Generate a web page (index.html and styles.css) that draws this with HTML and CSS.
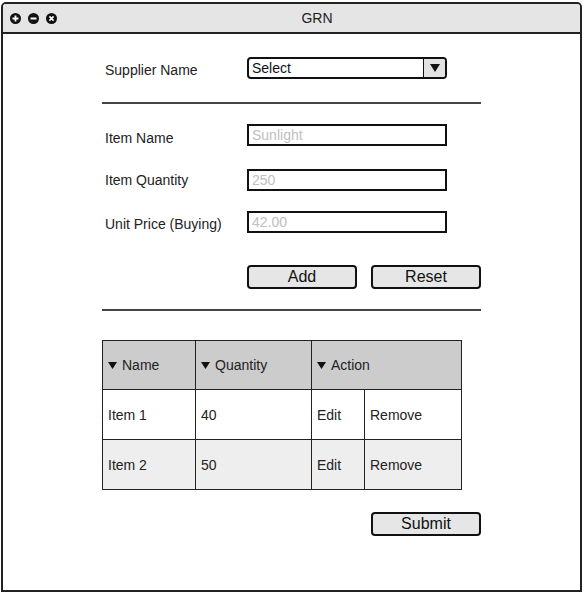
FILE: index.html
```html
<!DOCTYPE html>
<html>
<head>
<meta charset="utf-8">
<link rel="stylesheet" href="styles.css">
</head>
<body>
<div class="window">
  <div class="titlebar">
    <div class="wicons">
      <svg class="wicon" viewBox="0 0 11 11"><circle cx="5.5" cy="5.5" r="5.5" fill="#111"/><path d="M5.5 2.5v6M2.5 5.5h6" stroke="#fff" stroke-width="1.8"/></svg>
      <svg class="wicon" viewBox="0 0 11 11"><circle cx="5.5" cy="5.5" r="5.5" fill="#111"/><path d="M2.5 5.5h6" stroke="#fff" stroke-width="1.8"/></svg>
      <svg class="wicon" viewBox="0 0 11 11"><circle cx="5.5" cy="5.5" r="5.5" fill="#111"/><path d="M3.4 3.4l4.2 4.2M7.6 3.4l-4.2 4.2" stroke="#fff" stroke-width="1.6"/></svg>
    </div>
    <div class="wtitle">GRN</div>
  </div>
  <div class="form">
    <div class="row row-supplier">
      <div class="label lab-supplier">Supplier Name</div>
      <div class="select">
        <div class="select-text">Select</div>
        <div class="select-arrow"><svg width="10" height="8" viewBox="0 0 10 8"><polygon points="0,0 10,0 5,8" fill="#111"/></svg></div>
      </div>
    </div>
    <div class="divider d1"></div>
    <div class="row row-name">
      <div class="label lab-name">Item Name</div>
      <div class="input">Sunlight</div>
    </div>
    <div class="row row-qty">
      <div class="label lab-qty">Item Quantity</div>
      <div class="input">250</div>
    </div>
    <div class="row row-price">
      <div class="label lab-price">Unit Price (Buying)</div>
      <div class="input">42.00</div>
    </div>
    <div class="row row-buttons">
      <div class="btn">Add</div>
      <div class="btn">Reset</div>
    </div>
    <div class="divider d2"></div>
    <div class="grid">
      <div class="cell head"><svg class="sort" width="9" height="7" viewBox="0 0 9 7"><polygon points="0,0 9,0 4.5,7" fill="#111"/></svg>Name</div>
      <div class="cell head"><svg class="sort" width="9" height="7" viewBox="0 0 9 7"><polygon points="0,0 9,0 4.5,7" fill="#111"/></svg>Quantity</div>
      <div class="cell head span2"><svg class="sort" width="9" height="7" viewBox="0 0 9 7"><polygon points="0,0 9,0 4.5,7" fill="#111"/></svg>Action</div>
      <div class="cell">Item 1</div>
      <div class="cell">40</div>
      <div class="cell">Edit</div>
      <div class="cell">Remove</div>
      <div class="cell alt">Item 2</div>
      <div class="cell alt">50</div>
      <div class="cell alt">Edit</div>
      <div class="cell alt">Remove</div>
    </div>
    <div class="row row-submit">
      <div class="btn">Submit</div>
    </div>
  </div>
</div>
</body>
</html>
```

FILE: styles.css
```css
* { box-sizing: border-box; }
html, body { margin: 0; padding: 0; background: #fff; }
body {
  font-family: "Liberation Sans", Arial, sans-serif;
  font-size: 14px;
  color: #222;
}
.window {
  margin: 2px 0 0 1px;
  width: 581px;
  height: 590px;
  border: 2px solid #222;
  border-radius: 5px 5px 0 0;
  overflow: hidden;
}
.titlebar {
  height: 30px;
  background: #e5e5e5;
  border-bottom: 2px solid #222;
  display: flex;
  align-items: center;
}
.wicons {
  display: flex;
  gap: 7px;
  padding-left: 7px;
  width: 54px;
  margin-top: 1px;
}
.wicon { width: 11px; height: 11px; display: block; }
.wtitle {
  flex: 1;
  text-align: center;
  padding-right: 3px;
  font-size: 14px;
  line-height: 16px;
}
.form {
  margin: 23px 0 0 99px;
  width: 379px;
}
.row { display: flex; align-items: flex-start; }
.label {
  width: 145px;
  padding-left: 3px;
  line-height: 16px;
  color: #222;
}
.lab-supplier { padding-top: 5px; }
.lab-name { padding-top: 6px; }
.lab-qty { padding-top: 3px; }
.lab-price { padding-top: 5px; }
.select {
  width: 200px;
  height: 22px;
  border: 2px solid #111;
  border-radius: 4px;
  display: flex;
  overflow: hidden;
}
.select-text {
  flex: 1;
  padding-left: 3px;
  line-height: 18px;
  color: #111;
}
.select-arrow {
  width: 22px;
  border-left: 1px solid #111;
  background: #e2e2e2;
  display: flex;
  align-items: center;
  justify-content: center;
}
.select-arrow svg { display: block; }
.divider { height: 2px; background: #444; }
.d1 { margin-top: 23px; }
.row-name { margin-top: 20px; }
.row-qty { margin-top: 23px; }
.row-price { margin-top: 20px; }
.input {
  width: 200px;
  height: 22px;
  border: 2px solid #111;
  padding-left: 3px;
  line-height: 18px;
  color: #c0c0c0;
}
.row-buttons {
  margin-top: 32px;
  padding-left: 145px;
  gap: 14px;
}
.btn {
  width: 110px;
  height: 24px;
  border: 2px solid #111;
  border-radius: 4px;
  background: #e6e6e6;
  text-align: center;
  font-size: 16px;
  line-height: 20px;
  color: #111;
}
.d2 { margin-top: 20px; }
.grid {
  margin-top: 29px;
  width: 360px;
  display: grid;
  grid-template-columns: 93px 116px 53px 97px;
  grid-template-rows: 49px 50px 50px;
  border-left: 1px solid #222;
  border-top: 1px solid #222;
}
.cell {
  border-right: 1px solid #222;
  border-bottom: 1px solid #222;
  display: flex;
  align-items: center;
  padding-left: 5px;
  color: #222;
  background: #fff;
}
.cell.head { background: #cccccc; }
.cell.alt { background: #eeeeee; }
.span2 { grid-column: span 2; }
.sort { display: block; margin-right: 5px; margin-top: 1px; }
.row-submit { margin-top: 22px; padding-left: 269px; }
```
